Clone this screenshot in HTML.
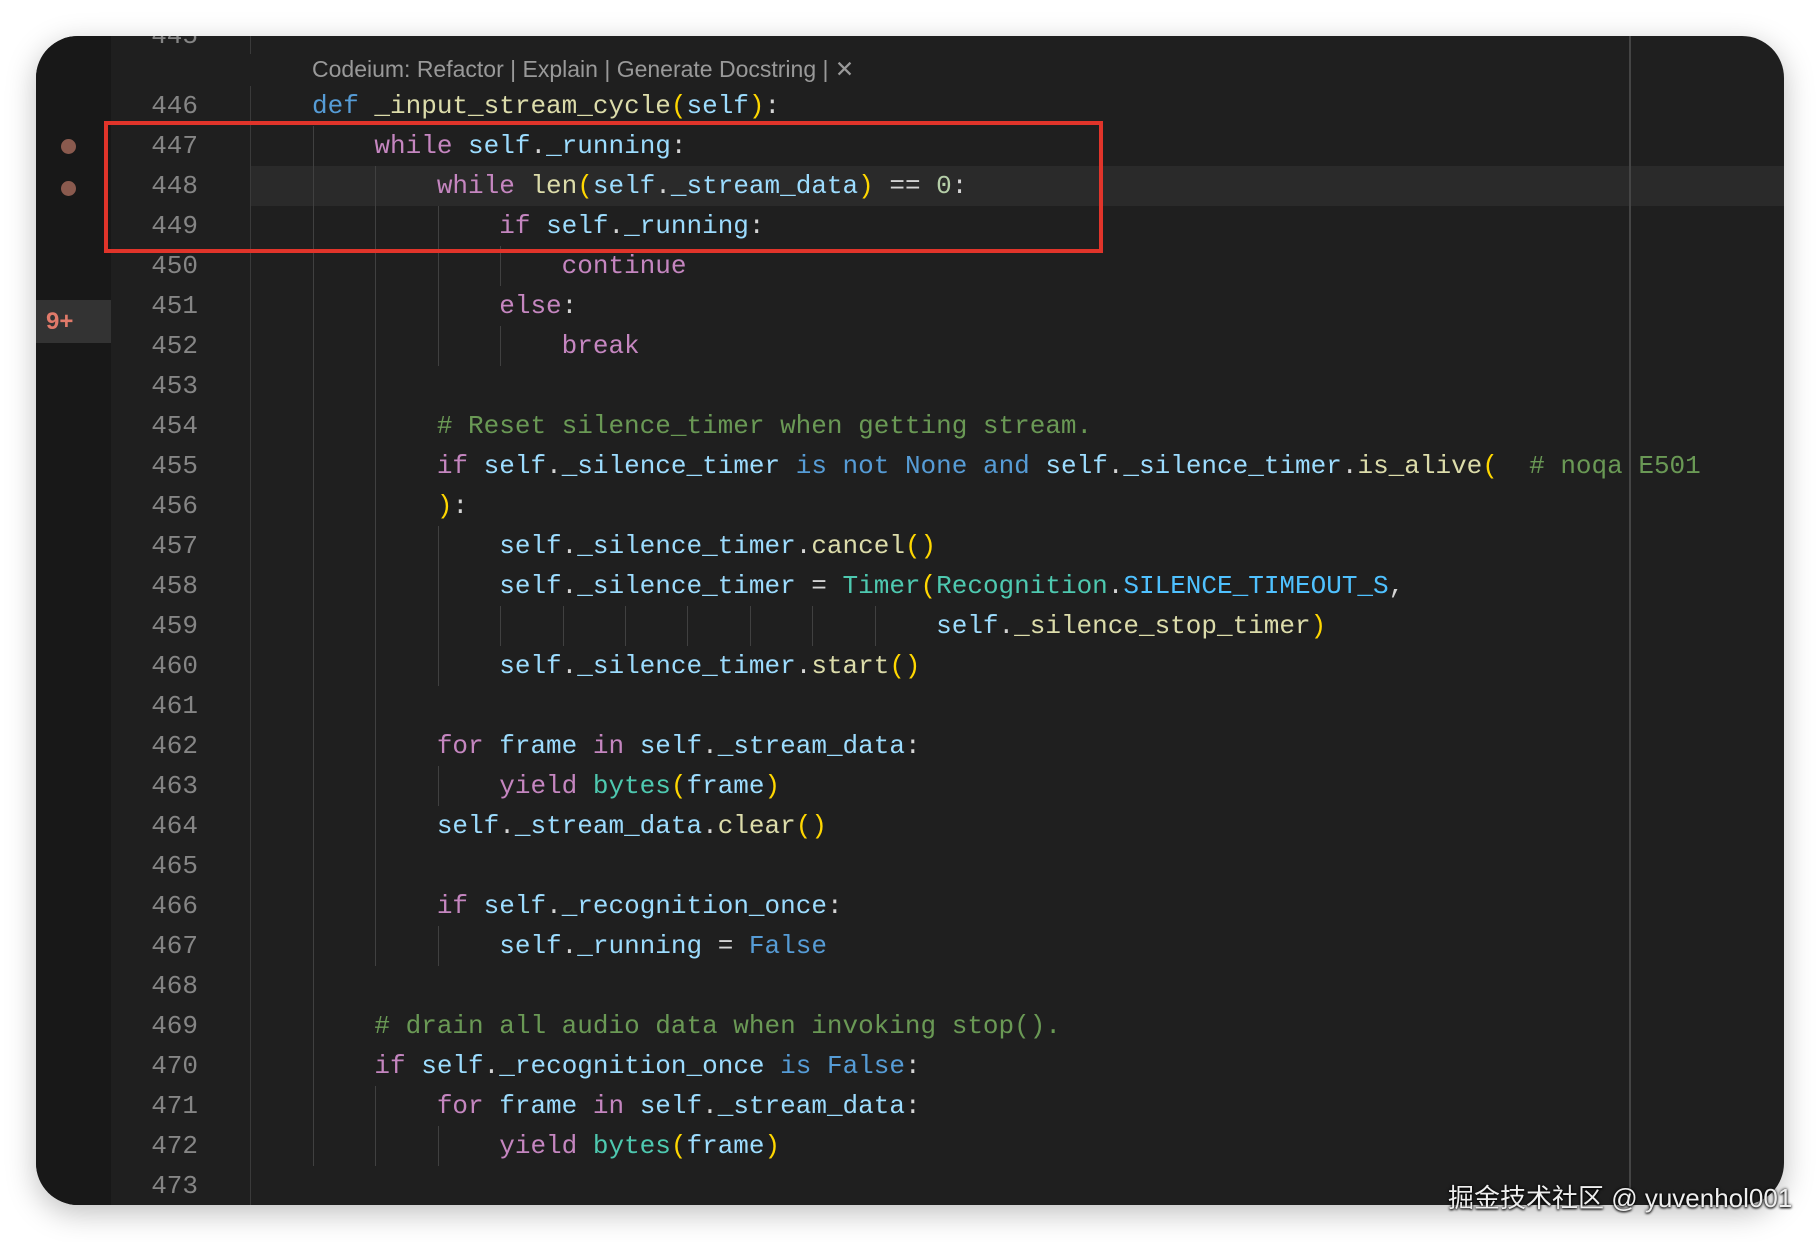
<!DOCTYPE html>
<html><head><meta charset="utf-8"><style>
*{margin:0;padding:0;box-sizing:border-box}
body{width:1820px;height:1242px;background:#fff;position:relative;overflow:hidden}
.win{position:absolute;left:36px;top:36px;width:1748px;height:1169px;background:#1f1f1f;border-radius:42px;overflow:hidden;box-shadow:0 8px 30px rgba(0,0,0,.25)}
.gut{position:absolute;left:0;top:0;width:75px;height:100%;background:#181818}
.badge{position:absolute;left:0;top:264px;width:75px;height:43px;background:#333;color:#e07a6a;font:bold 24px "Liberation Sans",sans-serif;padding:8px 0 0 10px}
.dot{position:absolute;left:25px;width:15px;height:15px;border-radius:50%;background:#8a5a4e}
.sep{position:absolute;left:214px;width:1px;background:#3a3a3a}
.ruler{position:absolute;left:1593px;top:0;width:2px;height:100%;background:#444}
.cur{position:absolute;left:215px;top:130px;width:1540px;height:40px;background:#2a2a2a}
.ln{position:absolute;left:60px;width:102px;text-align:right;color:#858585;font:26px/40px "Liberation Mono",monospace}
.code{position:absolute;left:276px;white-space:pre;color:#d4d4d4;font:26px/40px "Liberation Mono",monospace}
.g{position:absolute;width:1px;height:40px;background:#404040}
.lens{position:absolute;left:276px;top:18px;color:#999;font:23px/30px "Liberation Sans",sans-serif}
.red{position:absolute;left:68px;top:85px;width:999px;height:132px;border:4px solid #e0342a}
.k{color:#c586c0}.b{color:#569cd6}.f{color:#dcdcaa}.v{color:#9cdcfe}.p{color:#ffd700}.c{color:#6a9955}.n{color:#b5cea8}.t{color:#4ec9b0}.C{color:#4fc1ff}
.wm{position:absolute;left:1448px;top:1178px;color:#eee;font:26px "Liberation Sans","Noto Sans CJK SC",sans-serif;text-shadow:0 0 3px #000,0 1px 2px #000}
</style></head><body>
<div class="win">
<div class="gut"></div>
<div class="badge">9+</div>
<div class="dot" style="top:103px"></div>
<div class="dot" style="top:145px"></div>
<div class="cur"></div>
<div class="sep" style="top:0;height:18px"></div>
<div class="sep" style="top:50px;height:1200px"></div>
<div class="ruler"></div>
<div class="lens">Codeium: Refactor | Explain | Generate Docstring | ✕</div>
<div id="L"></div>
<div class="red"></div>
</div>
<div class="wm">掘金技术社区 @ yuvenhol001</div>
<script>
var lines=[
[445,0,''],
[446,0,'<span class="b">def</span> <span class="f">_input_stream_cycle</span><span class="p">(</span><span class="v">self</span><span class="p">)</span>:'],
[447,4,'    <span class="k">while</span> <span class="v">self</span>.<span class="v">_running</span>:'],
[448,8,'        <span class="k">while</span> <span class="f">len</span><span class="p">(</span><span class="v">self</span>.<span class="v">_stream_data</span><span class="p">)</span> == <span class="n">0</span>:'],
[449,12,'            <span class="k">if</span> <span class="v">self</span>.<span class="v">_running</span>:'],
[450,16,'                <span class="k">continue</span>'],
[451,12,'            <span class="k">else</span>:'],
[452,16,'                <span class="k">break</span>'],
[453,8,''],
[454,8,'        <span class="c"># Reset silence_timer when getting stream.</span>'],
[455,8,'        <span class="k">if</span> <span class="v">self</span>.<span class="v">_silence_timer</span> <span class="b">is not None and</span> <span class="v">self</span>.<span class="v">_silence_timer</span>.<span class="f">is_alive</span><span class="p">(</span>  <span class="c"># noqa E501</span>'],
[456,8,'        <span class="p">)</span>:'],
[457,12,'            <span class="v">self</span>.<span class="v">_silence_timer</span>.<span class="f">cancel</span><span class="p">()</span>'],
[458,12,'            <span class="v">self</span>.<span class="v">_silence_timer</span> = <span class="t">Timer</span><span class="p">(</span><span class="t">Recognition</span>.<span class="C">SILENCE_TIMEOUT_S</span>,'],
[459,40,'                                        <span class="v">self</span>.<span class="f">_silence_stop_timer</span><span class="p">)</span>'],
[460,12,'            <span class="v">self</span>.<span class="v">_silence_timer</span>.<span class="f">start</span><span class="p">()</span>'],
[461,8,''],
[462,8,'        <span class="k">for</span> <span class="v">frame</span> <span class="k">in</span> <span class="v">self</span>.<span class="v">_stream_data</span>:'],
[463,12,'            <span class="k">yield</span> <span class="t">bytes</span><span class="p">(</span><span class="v">frame</span><span class="p">)</span>'],
[464,8,'        <span class="v">self</span>.<span class="v">_stream_data</span>.<span class="f">clear</span><span class="p">()</span>'],
[465,8,''],
[466,8,'        <span class="k">if</span> <span class="v">self</span>.<span class="v">_recognition_once</span>:'],
[467,12,'            <span class="v">self</span>.<span class="v">_running</span> = <span class="b">False</span>'],
[468,4,''],
[469,4,'    <span class="c"># drain all audio data when invoking stop().</span>'],
[470,4,'    <span class="k">if</span> <span class="v">self</span>.<span class="v">_recognition_once</span> <span class="b">is</span> <span class="b">False</span>:'],
[471,8,'        <span class="k">for</span> <span class="v">frame</span> <span class="k">in</span> <span class="v">self</span>.<span class="v">_stream_data</span>:'],
[472,12,'            <span class="k">yield</span> <span class="t">bytes</span><span class="p">(</span><span class="v">frame</span><span class="p">)</span>'],
[473,0,'']];
var h='';
lines.forEach(function(l){
 var top=50+(l[0]-446)*40+(l[0]==445?-30:0);
 h+='<div class="ln" style="top:'+top+'px">'+l[0]+'</div>';
 for(var c=0;c<l[1];c+=4){h+='<div class="g" style="left:'+(277+c*15.6)+'px;top:'+top+'px"></div>';}
 h+='<div class="code" style="top:'+top+'px">'+l[2]+'</div>';
});
document.getElementById('L').innerHTML=h;
</script>
</body></html>
